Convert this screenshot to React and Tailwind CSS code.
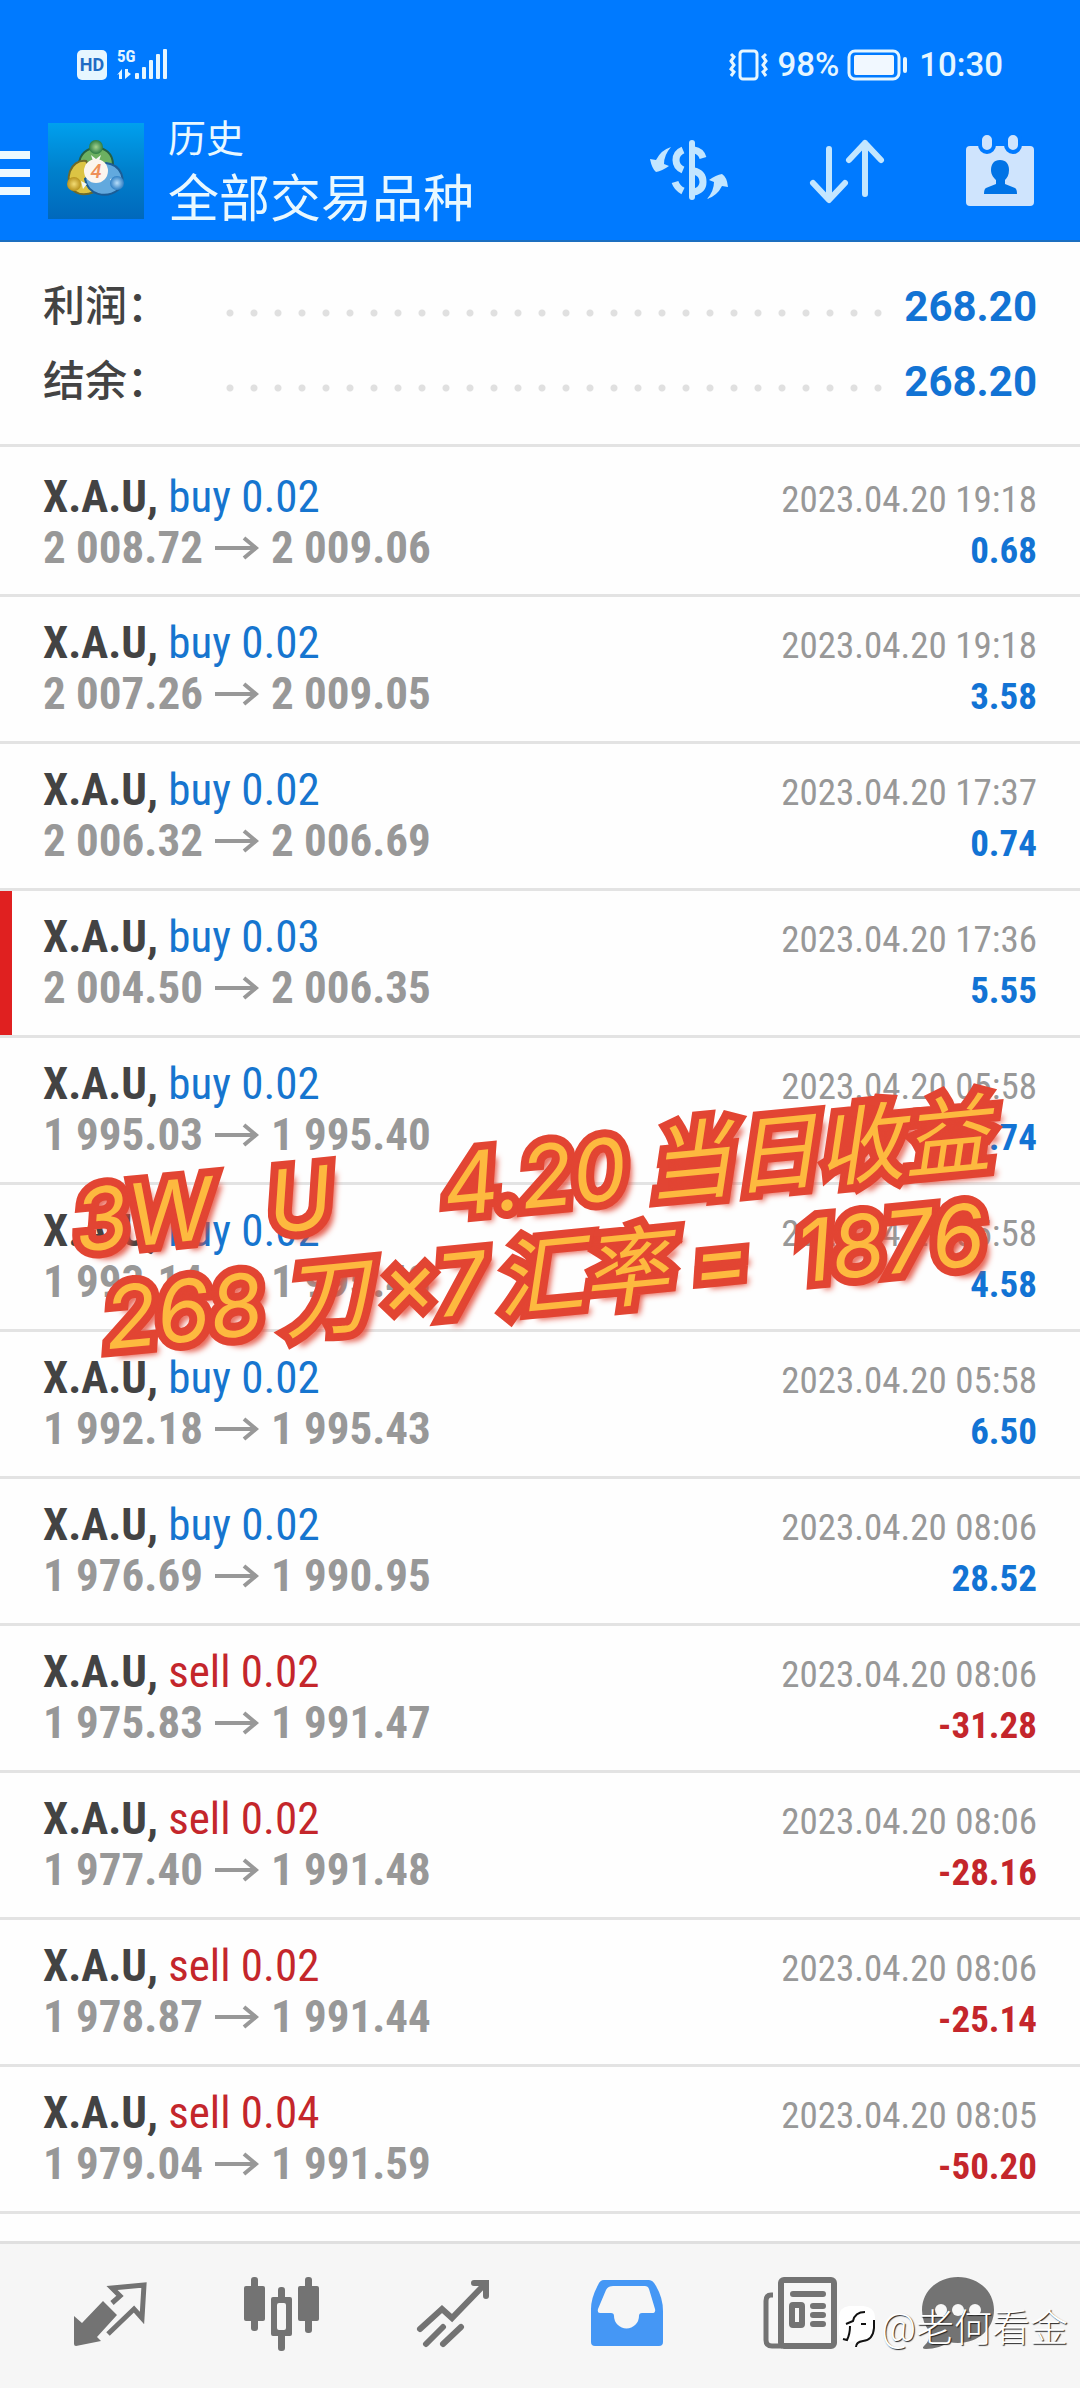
import clsx from 'clsx';

const summary = [
  { label: '利润', value: '268.20' },
  { label: '结余', value: '268.20' },
];

const deals = [
  { type: 'buy', volume: '0.02', open: '2 008.72', close: '2 009.06', time: '2023.04.20 19:18', profit: '0.68' },
  { type: 'buy', volume: '0.02', open: '2 007.26', close: '2 009.05', time: '2023.04.20 19:18', profit: '3.58' },
  { type: 'buy', volume: '0.02', open: '2 006.32', close: '2 006.69', time: '2023.04.20 17:37', profit: '0.74' },
  { type: 'buy', volume: '0.03', open: '2 004.50', close: '2 006.35', time: '2023.04.20 17:36', profit: '5.55', marked: true },
  { type: 'buy', volume: '0.02', open: '1 995.03', close: '1 995.40', time: '2023.04.20 05:58', profit: '0.74' },
  { type: 'buy', volume: '0.02', open: '1 993.14', close: '1 995.43', time: '2023.04.20 05:58', profit: '4.58' },
  { type: 'buy', volume: '0.02', open: '1 992.18', close: '1 995.43', time: '2023.04.20 05:58', profit: '6.50' },
  { type: 'buy', volume: '0.02', open: '1 976.69', close: '1 990.95', time: '2023.04.20 08:06', profit: '28.52' },
  { type: 'sell', volume: '0.02', open: '1 975.83', close: '1 991.47', time: '2023.04.20 08:06', profit: '-31.28' },
  { type: 'sell', volume: '0.02', open: '1 977.40', close: '1 991.48', time: '2023.04.20 08:06', profit: '-28.16' },
  { type: 'sell', volume: '0.02', open: '1 978.87', close: '1 991.44', time: '2023.04.20 08:06', profit: '-25.14' },
  { type: 'sell', volume: '0.04', open: '1 979.04', close: '1 991.59', time: '2023.04.20 08:05', profit: '-50.20' },
];

const StatusBar = () => (
  <div className="flex h-[110px] items-center justify-between px-[77px] pt-5 text-[33px] font-medium text-[#e6f6ff]">
    <div className="flex items-center gap-2">
      <span className="flex h-[30px] w-[30px] items-center justify-center rounded-[5px] bg-[#e6f6ff] text-[18px] leading-none font-bold text-[#1f6cc4]">
        HD
      </span>
      <div className="relative h-8 w-14">
        <span className="absolute left-[2px] top-0 text-[17px] leading-[14px] font-bold font-['Roboto_Condensed','Liberation_Sans_Narrow',sans-serif]">
          5G
        </span>
        <svg width="56" height="32" viewBox="0 0 56 32" fill="#e6f6ff">
          <path d="M2 26l5-6v10h-3v-5zM10 20v10l6-5-3-2v-3z" />
          <rect x="20" y="24" width="4" height="6" rx="1" />
          <rect x="27" y="18" width="4" height="12" rx="1" />
          <rect x="34" y="11" width="4" height="19" rx="1" />
          <rect x="41" y="5" width="4" height="25" rx="1" />
          <rect x="48" y="0" width="4" height="30" rx="1" />
        </svg>
      </div>
    </div>
    <div className="flex items-center gap-2 leading-10">
      <svg width="40" height="32" viewBox="0 0 40 32" fill="none" stroke="#e6f6ff" strokeWidth="3">
        <rect x="11" y="2" width="17" height="28" rx="3" />
        <path d="M2 5l3 3-3 4 3 4-3 4 3 3-3 4M37 5l-3 3 3 4-3 4 3 4-3 3 3 4" />
      </svg>
      <span>98%</span>
      <svg width="60" height="32" viewBox="0 0 60 32" fill="none">
        <rect x="2" y="2" width="50" height="28" rx="6" stroke="#e6f6ff" strokeWidth="3" />
        <rect x="7" y="6" width="40" height="20" rx="2" fill="#f1f8ff" />
        <rect x="56" y="8" width="4" height="16" rx="2" fill="#e6f6ff" />
      </svg>
      <span className="pl-1">10:30</span>
    </div>
  </div>
);

const AppLogo = () => (
  <svg width="96" height="96" viewBox="0 0 96 96" aria-hidden="true">
    <defs>
      <linearGradient id="logoBg" x1="0" y1="0" x2="0" y2="1">
        <stop offset="0" stopColor="#00a0ee" />
        <stop offset="0.5" stopColor="#0080cc" />
        <stop offset="1" stopColor="#0068bc" />
      </linearGradient>
      <radialGradient id="greenBall"><stop offset="0" stopColor="#a4d290" /><stop offset="1" stopColor="#2d7d42" /></radialGradient>
      <radialGradient id="yellowBall"><stop offset="0" stopColor="#f3dc74" /><stop offset="1" stopColor="#b8921c" /></radialGradient>
      <radialGradient id="blueBall"><stop offset="0" stopColor="#b8defa" /><stop offset="1" stopColor="#2f7fc4" /></radialGradient>
    </defs>
    <rect width="96" height="96" fill="url(#logoBg)" />
    <g strokeWidth="2">
      <path d="M31 42C31 20 65 18 65 42Q65 52 57 56L35 46Z" fill="#6cb061" stroke="#256043" />
      <path d="M38 38C22 36 15 58 26 68Q34 74 46 69L48 54Z" fill="#dcc444" stroke="#6d6a2a" />
      <path d="M58 40C74 42 79 58 70 67C58 76 40 72 37 56Z" fill="#62a9de" stroke="#1c5d96" />
    </g>
    <path d="M43 32l5 4 5-4-2 6h-6zM33 58l6 3-4 5zM62 56l5-1-2 7z" fill="#f2f8f4" />
    <circle cx="48" cy="24" r="7" fill="url(#greenBall)" />
    <circle cx="26" cy="61" r="7" fill="url(#yellowBall)" />
    <circle cx="69" cy="60" r="7" fill="url(#blueBall)" />
    <circle cx="48" cy="48" r="12" fill="#fbf5ee" />
    <text x="48" y="55" textAnchor="middle" fontSize="20" fontWeight="500" fontStyle="italic" fill="#ee9058">4</text>
  </svg>
);

const AppBar = () => (
  <div className="flex h-[122px] items-center pr-[38px]">
    <button aria-label="菜单" className="flex w-12 flex-col gap-[10px] pt-1">
      <span className="h-2 w-[30px] bg-[#ecf9ff]" />
      <span className="h-2 w-[30px] bg-[#ecf9ff]" />
      <span className="h-2 w-[30px] bg-[#ecf9ff]" />
    </button>
    <AppLogo />
    <div className="flex flex-1 flex-col pt-1 pl-6 text-[#e9f8ff]">
      <span className="text-[38px] leading-[54px]">历史</span>
      <h1 className="text-[51px] leading-[68px]">全部交易品种</h1>
    </div>
    <div className="flex items-center gap-[67px] pb-1">
      <button aria-label="货币">
        <svg width="90" height="72" viewBox="0 0 90 72" fill="#c3e6ff">
          <path d="M27 14Q17 17 12 27L6 26Q8 36 12 39Q18 38 25 33L20 31Q20 22 27 14Z" />
          <path d="M63 66Q73 63 78 53L84 54Q83 44 78 41Q72 42 65 47L70 49Q70 58 63 66Z" />
          <g fill="none" stroke="#c3e6ff" strokeWidth="7">
            <path d="M48 10v54" strokeWidth="6" strokeLinecap="round" />
            <path d="M39 17Q32 20 32 27Q32 34 39 37M50 17Q57 18 59 25" />
            <path d="M50 38Q59 40 59 49Q59 57 50 59M31 49Q33 55 39 58" />
          </g>
        </svg>
      </button>
      <button aria-label="排序">
        <svg width="90" height="72" viewBox="0 0 90 72" fill="none" stroke="#c3e6ff" strokeWidth="6" strokeLinecap="round" strokeLinejoin="round">
          <path d="M28 16v50M12 50l16 17 16-17M64 61V10M48 27l16-17 16 17" />
        </svg>
      </button>
      <button aria-label="日期">
        <svg width="84" height="84" viewBox="0 0 84 84" fill="#cfe4fd">
          <rect x="8" y="19" width="68" height="60" rx="4" />
          <g stroke="#007aff" strokeWidth="4">
            <rect x="22" y="6" width="14" height="19" rx="7" />
            <rect x="48" y="6" width="14" height="19" rx="7" />
          </g>
          <path fill="#0073e6" d="M42 33c6 0 9 4 9 10 0 5-2 8-4 10v4l10 4q2 1 2 6H26q0-5 2-6l10-4v-4c-2-2-5-5-5-10 0-6 3-10 9-10z" />
        </svg>
      </button>
    </div>
  </div>
);

const Deal = ({ deal }) => {
  const isBuy = deal.type === 'buy';
  const isLoss = deal.profit.startsWith('-');

  return (
    <li
      className={clsx(
        "flex h-[147px] items-baseline justify-between border-b-[3px] border-[#e3e3e3] px-[43px] pt-5 font-['Roboto_Condensed','Liberation_Sans_Narrow',Roboto,sans-serif] first:h-[150px] first:pt-6",
        deal.marked && 'bg-[linear-gradient(90deg,#e02020_12px,transparent_12px)]'
      )}
    >
      <div className="text-[45px] leading-[51px]">
        <p>
          <span className="font-bold text-[#434343]">X.A.U,</span>{' '}
          <span className={isBuy ? 'text-[#1675cf]' : 'text-[#c4262b]'}>
            {deal.type} {deal.volume}
          </span>
        </p>
        <p className="flex items-center font-bold text-[#989898]">
          {deal.open}
          <svg className="mx-3" width="44" height="24" viewBox="0 0 44 24" fill="none" stroke="#989898" strokeWidth="4" aria-label="→">
            <path d="M0 12h41M29 2l12 10-12 10" />
          </svg>
          {deal.close}
        </p>
      </div>
      <div className="text-right text-[37px] leading-[51px]">
        <p className="text-[#989898]">{deal.time}</p>
        <p className={clsx('font-bold', isLoss ? 'text-[#c4262b]' : 'text-[#1273d4]')}>{deal.profit}</p>
      </div>
    </li>
  );
};

const tabs = [
  {
    name: '行情',
    icon: (
      <>
        <path d="M4 40L12 47L33 25L47 39L27 61L31 65L6 70Q4 70 4 68Z" fill="#737373" />
        <path d="M42 27L50 20L42 12L74 9L72 42L64 33L38 58" fill="none" stroke="#737373" strokeWidth="5" />
      </>
    ),
  },
  {
    name: '图表',
    icon: (
      <g fill="#737373">
        <rect x="2" y="10" width="21" height="35" rx="2" />
        <rect x="9" y="1" width="7" height="54" rx="3" />
        <path fillRule="evenodd" d="M31 21h17q2 0 2 2v35q0 2-2 2H31q-2 0-2-2V23q0-2 2-2zM37 27q-2 0-2 2v23q0 2 2 2h5q2 0 2-2V29q0-2-2-2z" />
        <path d="M36 22v-8q0-3 3-3h1q3 0 3 3v8zM36 59v13q0 3 3 3h1q3 0 3-3V59z" />
        <rect x="56" y="10" width="21" height="35" rx="2" />
        <rect x="63" y="1" width="7" height="56" rx="3" />
      </g>
    ),
  },
  {
    name: '交易',
    icon: (
      <g fill="none" stroke="#737373" strokeWidth="6" strokeLinecap="round">
        <path d="M6 53L28 33L38 42L71 8M60 7H72V20M12 68L29 51M29 68L47 51" />
      </g>
    ),
  },
  {
    name: '历史',
    icon: (
      <path
        fill="#4597f5"
        fillRule="evenodd"
        d="M18 4H63Q67 4 70 10Q77 22 77 35V66Q77 70 73 70H9Q5 70 5 66V33Q5 22 12 9Q14 4 18 4ZM27 10H59Q62 10 63 13L69 33Q70 37 66 37H56Q53 37 53 40A12 12 0 0 1 28 40Q28 37 25 37H14Q11 37 12 33L20 14Q22 10 27 10Z"
      />
    ),
  },
  {
    name: '新闻',
    icon: (
      <g fill="none" stroke="#737373" strokeWidth="6">
        <rect x="23" y="4" width="53" height="66" rx="3" />
        <path d="M15 19H13Q8 19 8 25V64Q8 70 14 70H24" strokeWidth="5" />
        <path d="M35 18H65M55 30H65M55 39H65M55 48H65" strokeLinecap="round" />
        <rect x="34" y="29" width="10" height="20" rx="1" />
      </g>
    ),
  },
  {
    name: '消息',
    icon: (
      <>
        <path d="M40 1C60 1 76 15 76 34S60 67 40 67Q35 67 31 66Q21 73 8 73Q3 73 6 70Q12 65 12 56Q4 47 4 34C4 15 20 1 40 1Z" fill="#737373" />
        <g fill="#f7f7f7">
          <circle cx="23" cy="34" r="6" />
          <circle cx="40" cy="34" r="6" />
          <circle cx="57" cy="34" r="6" />
        </g>
      </>
    ),
  },
];

const Caption = () => (
  <div className="absolute left-[70px] top-[1171px] origin-top-left rotate-[-5.5deg] whitespace-pre text-[86px] leading-[100px] italic text-[#fdb93f] font-['Inter','Noto_Sans_CJK_SC',sans-serif] [paint-order:stroke_fill] [-webkit-text-stroke:16px_#e24533] [text-shadow:8px_9px_6px_#e24533]">
    <p className="flex">
      <span>3W</span>
      <span className="pl-14">U</span>
      <span className="pl-28">4.20</span>
      <span className="pl-5">当日收益</span>
    </p>
    <p className="flex pl-5">
      <span>268</span>
      <span className="pl-5">刀</span>
      <span className="pl-3">×7</span>
      <span className="pl-3">汇率</span>
      <span className="pl-6">=</span>
      <span className="pl-12">1876</span>
    </p>
  </div>
);

const Watermark = () => (
  <div className="absolute right-3 bottom-8 flex items-center gap-1 text-[38px] leading-[56px] font-light text-white [text-shadow:1px_1px_1px_#222]">
    <svg width="40" height="48" viewBox="0 0 40 48" aria-hidden="true">
      <path d="M12 2H26Q38 3 38 14V26Q37 36 27 38Q21 40 19 44Q16 41 19 37L10 38Q2 36 2 26V14Q2 3 12 2Z" fill="#fff" />
      <path d="M37 16V24Q36 36 26 37Q19 38 19 43" fill="none" stroke="#111" strokeWidth="2" />
      <path d="M28 8Q18 8 16 17L9 20M24 20h5M13 22Q13 30 10 36L6 35" fill="none" stroke="#111" strokeWidth="2" />
    </svg>
    <span>@老何看金</span>
  </div>
);

export default function App() {
  return (
    <div className="relative flex h-screen flex-col overflow-hidden bg-[#fefefe] font-['Roboto','Noto_Sans_CJK_SC',sans-serif]">
      <header className="shrink-0 border-b-2 border-[#1c6fc0] bg-[#007aff] pb-2">
        <StatusBar />
        <AppBar />
      </header>

      <main className="min-h-0 flex-1 overflow-hidden">
        <dl className="border-b-[3px] border-[#e3e3e3] pt-[27px] pb-[25px]">
          {summary.map((row) => (
            <div key={row.label} className="flex h-[75px] items-center px-[43px] text-[42px]">
              <dt className="w-[175px] font-medium text-[#434343]">{row.label}：</dt>
              {/* dotted leader */}
              <dd className="flex flex-1 items-center">
                <span className="mt-3 mr-3 h-2 flex-1 bg-[radial-gradient(circle,#e0e0e0_3px,transparent_4px)] bg-[length:24px_8px] bg-repeat-x" />
                <span className="font-bold text-[#1273d4]">{row.value}</span>
              </dd>
            </div>
          ))}
        </dl>
        <ul>
          {deals.map((deal, i) => (
            <Deal key={i} deal={deal} />
          ))}
        </ul>
      </main>

      <nav className="grid h-[147px] shrink-0 grid-cols-6 border-t-[3px] border-[#e0e0e0] bg-[#f6f6f6] px-6">
        {tabs.map((tab) => (
          <button key={tab.name} aria-label={tab.name} className="flex items-center justify-center last:pr-6">
            <svg width="80" height="80" viewBox="0 0 80 80">
              {tab.icon}
            </svg>
          </button>
        ))}
      </nav>

      <Caption />
      <Watermark />
    </div>
  );
}
